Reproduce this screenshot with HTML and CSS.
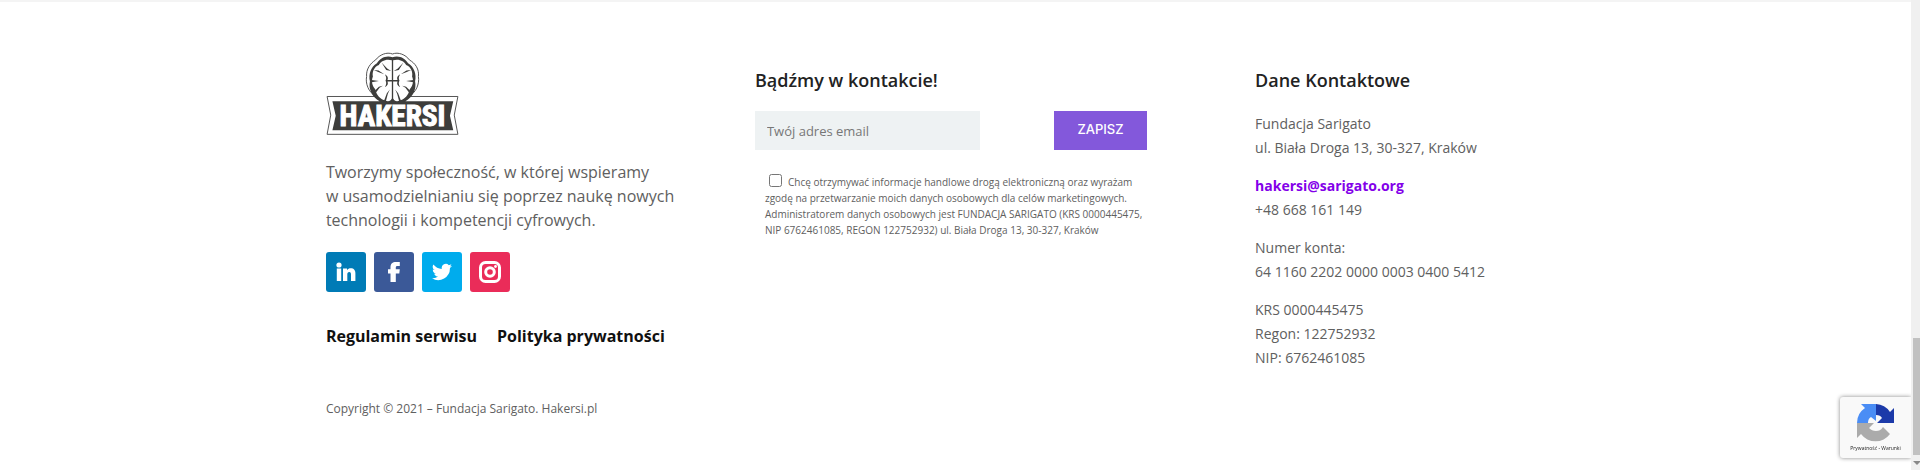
FILE: index.html
```html
<!DOCTYPE html>
<html lang="pl">
<head>
<meta charset="utf-8">
<title>Hakersi</title>
<link rel="stylesheet" href="styles.css">
</head>
<body>
<div class="page">
<footer class="footer">
  <section class="about">
    <svg class="logo" viewBox="0 0 398 250" role="img" aria-label="Hakersi">
      <g class="logo-frame">
        <path d="M150 134C126 122 117 94 121 74C119 52 132 34 148 24C160 8 182 -1 199 6C216 -1 239 8 250 24C268 34 280 52 277 74C281 96 270 122 248 134"/>
        <path d="M2 134H396L385 190L396 248H2L13 190Z"/>
      </g>
      <path class="logo-dark" d="M18 148H160C138 136 126 112 131 88C126 68 134 44 152 34C160 18 182 8 199 16C216 8 238 18 246 34C264 44 272 68 267 88C272 112 260 136 238 148H382L372 192L382 236H18L28 192Z"/>
      <path class="logo-light" d="M197 25C180 19 163 28 158 39C144 44 137 60 140 74C134 88 139 105 147 112C150 129 163 143 178 146C186 151 194 147 197 140Z"/>
      <path class="logo-light" d="M201 25C218 19 235 28 240 39C254 44 261 60 258 74C264 88 259 105 251 112C248 129 235 143 220 146C212 151 204 147 201 140Z"/>
      <path class="logo-dark" d="M184 84H214C211 76 214 72 222 67C217 76 217 80 220 86C217 92 217 98 222 106C214 102 211 96 214 89H184C187 96 184 102 176 106C181 98 181 92 178 86C181 80 181 76 176 67C184 72 187 76 184 84ZM166 32L183 50L195 57L180 54ZM232 32L215 50L203 57L218 54ZM143 54L157 56L174 67L156 60ZM255 54L241 56L224 67L242 60ZM136 84L158 87L136 91ZM262 84L240 87L262 91ZM144 118L158 105L170 102L160 108L150 121ZM254 118L240 105L228 102L238 108L248 121ZM173 148L182 124L191 113L185 126L179 148ZM225 148L216 124L207 113L213 126L219 148Z"/>
      <text class="logo-text" x="199" y="223" text-anchor="middle">HAKERSI</text>
    </svg>
    <p class="lead">Tworzymy społeczność, w której wspieramy<br>w&nbsp;usamodzielnianiu się poprzez naukę nowych<br>technologii i kompetencji cyfrowych.</p>
    <nav class="social" aria-label="Media społecznościowe">
      <a class="linkedin" href="#" aria-label="LinkedIn"><svg viewBox="0 0 20 20"><circle cx="3" cy="3" r="2.6"/><path d="M.8 6.500h4.400v12.500H.8zM7 6.500h4v1.700C12 6.900 13.200 6.300 14.600 6.300c3.400 0 4.800 2 4.800 5.200V19h-4.400v-6.500c0-1.500-.4-2.500-1.700-2.500-1.500 0-2 1.100-2 2.600V19H7z"/></svg></a>
      <a class="facebook" href="#" aria-label="Facebook"><svg viewBox="0 0 20 20"><path d="M6.500 20.500v-9H4V7.300h2.500V5.400C6.500 1.800 8.500 0 12 0h3.800v4h-2.300c-1.300 0-1.700.5-1.700 1.600v1.700h4l-.5 4.200h-3.500v9z"/></svg></a>
      <a class="twitter" href="#" aria-label="Twitter"><svg viewBox="0 0 24 24"><path d="M24 4.600a10 10 0 0 1-2.800.8 5 5 0 0 0 2.100-2.700 10 10 0 0 1-3.100 1.200 4.900 4.900 0 0 0-8.400 4.500A14 14 0 0 1 1.700 3.100a4.900 4.900 0 0 0 1.500 6.600 5 5 0 0 1-2.200-.6 4.900 4.900 0 0 0 3.900 4.900 5 5 0 0 1-2.200.1 4.900 4.900 0 0 0 4.600 3.400A10 10 0 0 1 0 19.500a14 14 0 0 0 21.500-12.400A10 10 0 0 0 24 4.600z"/></svg></a>
      <a class="instagram" href="#" aria-label="Instagram"><svg viewBox="0 0 22 22"><rect class="ring" x="1.500" y="1.500" width="19" height="19" rx="5"/><circle class="ring" cx="11" cy="11" r="4.300"/><circle cx="16.500" cy="5.500" r="1.400"/></svg></a>
    </nav>
    <nav class="legal"><a href="#">Regulamin serwisu</a><a href="#">Polityka prywatności</a></nav>
    <p class="copyright">Copyright © 2021 – Fundacja Sarigato. Hakersi.pl</p>
  </section>

  <section class="newsletter">
    <h2>Bądźmy w kontakcie!</h2>
    <form>
      <div class="signup">
        <input class="email" type="email" placeholder="Twój adres email" aria-label="Twój adres email">
        <button class="submit" type="button">ZAPISZ</button>
      </div>
      <label class="consent"><input class="tick" type="checkbox">Chcę otrzymywać informacje handlowe drogą elektroniczną oraz wyrażam zgodę na przetwarzanie moich danych osobowych dla celów marketingowych. Administratorem danych osobowych jest FUNDACJA SARIGATO (KRS 0000445475, NIP 6762461085, REGON 122752932) ul. Biała Droga 13, 30-327, Kraków</label>
    </form>
  </section>

  <section class="contact">
    <h2>Dane Kontaktowe</h2>
    <p>Fundacja Sarigato<br>ul. Biała Droga 13, 30-327, Kraków</p>
    <p><a class="mail" href="mailto:hakersi@sarigato.org">hakersi@sarigato.org</a><br>+48 668 161 149</p>
    <p>Numer konta:<br>64 1160 2202 0000 0003 0400 5412</p>
    <p>KRS 0000445475<br>Regon: 122752932<br>NIP: 6762461085</p>
  </section>
</footer>
<aside class="recaptcha">
  <svg class="recaptcha-mark" viewBox="0 0 38 38" aria-hidden="true">
    <path fill="#1c3aa9" d="M37 19V4l-4 4A18 18 0 0 0 19 0v11c3 0 5 1 6 3l-5 5z"/>
    <path fill="#4a8df5" d="M19 0H4l4 4A18 18 0 0 0 0 19h11c0-3 1-5 3-6l5 4z"/>
    <path fill="#ababab" d="M0 19v15l4-4a18 18 0 0 0 29 0l-7-7c-2 3-4 4-7 4-3 0-5-1-7-3l5-5z"/>
  </svg>
  <span class="recaptcha-links"><a href="#">Prywatność</a> - <a href="#">Warunki</a></span>
</aside>
</div>
<div class="scrollbar" aria-hidden="true"><div class="thumb"></div><div class="arrow"></div></div>
</body>
</html>
```
FILE: styles.css
```css
* { box-sizing: border-box; }
body {
  margin: 0;
  min-height: 100vh;
  display: flex;
  background: #fff;
  color: #606060;
  font: 14px/24px "Open Sans", "Noto Sans", sans-serif;
  overflow: hidden;
}
a { color: inherit; text-decoration: none; }
h2, p { margin: 0; }

.page { flex: 1; border-top: 2px solid #f4f4f4; }
.footer {
  width: 66%;
  margin: 0 auto;
  padding: 50px 0 0 1px;
  display: grid;
  grid-template-columns: 429fr 500fr 331fr;
}
.logo { display: block; width: 133px; height: 83px; }
.logo-frame { fill: #fff; stroke: #555; stroke-width: 3; }
.logo-dark { fill: #3d3d3b; }
.logo-light { fill: #fff; }
.logo-text {
  font: bold 88px "Liberation Sans Narrow", "Roboto Condensed", Roboto, sans-serif;
  fill: #fff;
  stroke: #fff;
  stroke-width: 3;
}
.lead { margin-top: 25px; font-size: 16px; }

.social { display: flex; gap: 8px; margin-top: 20px; }
.social a {
  width: 40px;
  height: 40px;
  display: grid;
  place-items: center;
  border-radius: 3px;
}
.social svg { width: 20px; height: 20px; fill: #fff; }
.social .instagram svg { width: 22px; height: 22px; }
.ring { fill: none; stroke: #fff; stroke-width: 3; }
.linkedin { background: #007bb6; }
.facebook { background: #3b5998; }
.twitter { background: #00aced; }
.instagram { background: #ea2c59; }

.legal { display: flex; gap: 20px; margin-top: 32px; font-size: 16px; font-weight: 700; color: #111; }
.copyright { margin-top: 49px; font-size: 12px; }

h2 { padding-top: 16px; font-size: 18px; line-height: 24px; font-weight: 600; color: #222; }
.signup { display: flex; justify-content: space-between; width: 392px; margin-top: 19px; }
.email {
  width: 225px;
  height: 39px;
  padding: 0 12px;
  border: 0;
  background: #eef2f3;
  font: 13px "Open Sans", sans-serif;
}
.email::placeholder { color: #777; opacity: 1; }
.submit {
  width: 93px;
  height: 39px;
  padding: 0 0 4px;
  border: 0;
  background: #8358db;
  color: #fff;
  font: 500 13px Inter, Roboto, sans-serif;
}
.consent { display: block; width: 392px; margin-top: 24px; padding-left: 10px; font-size: 10px; line-height: 16px; }
.tick { width: 13px; height: 13px; margin: 0 6px 0 4px; vertical-align: -1px; }

.contact h2 { margin-bottom: 20px; }
.contact p { margin-bottom: 14px; }
.contact .mail { font-weight: 700; color: #8300e9; }

.recaptcha {
  position: fixed;
  right: 9px;
  bottom: 12px;
  width: 71px;
  height: 61px;
  padding-top: 7px;
  display: flex;
  flex-direction: column;
  align-items: center;
  border-radius: 3px 0 0 3px;
  background: #f9f9f9;
  box-shadow: 0 0 4px #888;
  clip-path: inset(-6px 0 -6px -6px);
}
.recaptcha-mark { width: 38px; height: 38px; }
.recaptcha-links { font-size: 5px; line-height: 12px; color: #222; white-space: nowrap; }

.scrollbar { width: 9px; padding-left: 2px; z-index: 1; display: flex; flex-direction: column; justify-content: flex-end; background: #f0f0f0; }
.thumb { height: 117px; background: #c1c1c1; }
.arrow { margin: 6px 0 5px; border: 4px solid transparent; border-top-color: #888; border-bottom: 0; }
```
